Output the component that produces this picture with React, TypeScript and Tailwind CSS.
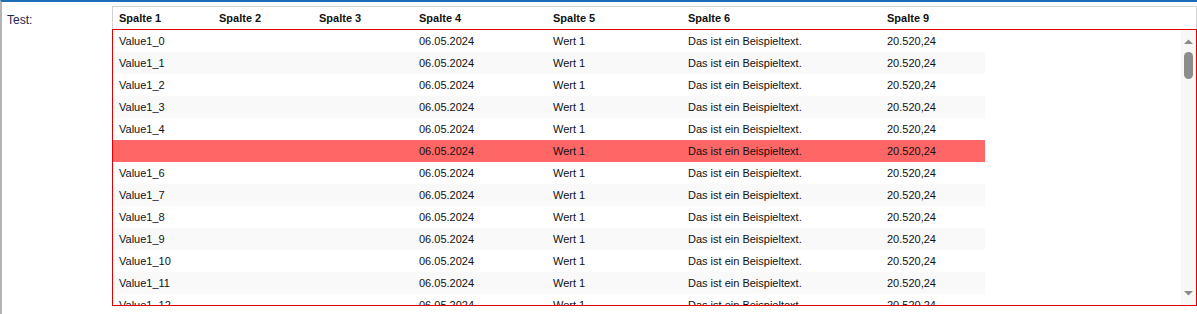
import React from "react";

const cols = [
  { label: "Spalte 1", w: "w-[100px]" },
  { label: "Spalte 2", w: "w-[100px]" },
  { label: "Spalte 3", w: "w-[100px]" },
  { label: "Spalte 4", w: "w-[134px]" },
  { label: "Spalte 5", w: "w-[135px]" },
  { label: "Spalte 6", w: "w-[199px]" },
  { label: "Spalte 9", w: "w-[104px]" },
];

const rows = Array.from({ length: 13 }, (_, i) => [
  i === 5 ? "" : `Value1_${i}`,
  "",
  "",
  "06.05.2024",
  "Wert 1",
  "Das ist ein Beispieltext.",
  "20.520,24",
]);

export default function App() {
  return (
    <div
      className="w-[1197px] h-[314px] bg-white border-l-2 border-l-[#b3b3b3] border-t-2 border-t-[#1d6db6] flex overflow-hidden text-[11px] text-[#111]"
      style={{ fontFamily: '"Liberation Sans", Arial, sans-serif' }}
    >
      <div className="w-[110px] shrink-0 pl-[5px] pt-[9px] text-[12px] text-[#25254a]">Test:</div>
      <div className="mt-[4px] w-[1085px] h-[300px] flex flex-col shrink-0">
        <div className="h-[23px] border border-b-0 border-[#d3d3d3] flex items-center font-bold">
          {cols.map((c) => (
            <div key={c.label} className={`${c.w} shrink-0 pl-[6px] pt-[1px]`}>
              {c.label}
            </div>
          ))}
        </div>
        <div className="h-[277px] border border-[#e00000] flex overflow-hidden">
          <div className="w-[872px] shrink-0 flex flex-col">
            {rows.map((r, i) => (
              <div
                key={i}
                className={`h-[22px] shrink-0 flex items-center ${
                  i === 5 ? "bg-[#ff6666]" : i % 2 === 1 ? "bg-[#f9f9f9]" : "bg-white"
                }`}
              >
                {r.map((v, j) => (
                  <div key={j} className={`${cols[j].w} shrink-0 pl-[6px]`}>
                    {v}
                  </div>
                ))}
              </div>
            ))}
          </div>
          <div className="flex-1" />
          <div className="w-[15px] shrink-0 bg-[#f7f7f7] flex flex-col items-center">
            <svg width="9" height="6" viewBox="0 0 9 6" className="mt-[9px]">
              <polygon points="4.5,0.5 9,5 0,5" fill="#8a8a8a" />
            </svg>
            <div className="mt-[7px] w-[9px] h-[27px] rounded-full bg-[#8c8c8c]" />
            <div className="flex-1" />
            <svg width="9" height="6" viewBox="0 0 9 6" className="mb-[9px]">
              <polygon points="0,1 9,1 4.5,5.5" fill="#8a8a8a" />
            </svg>
          </div>
        </div>
      </div>
    </div>
  );
}
